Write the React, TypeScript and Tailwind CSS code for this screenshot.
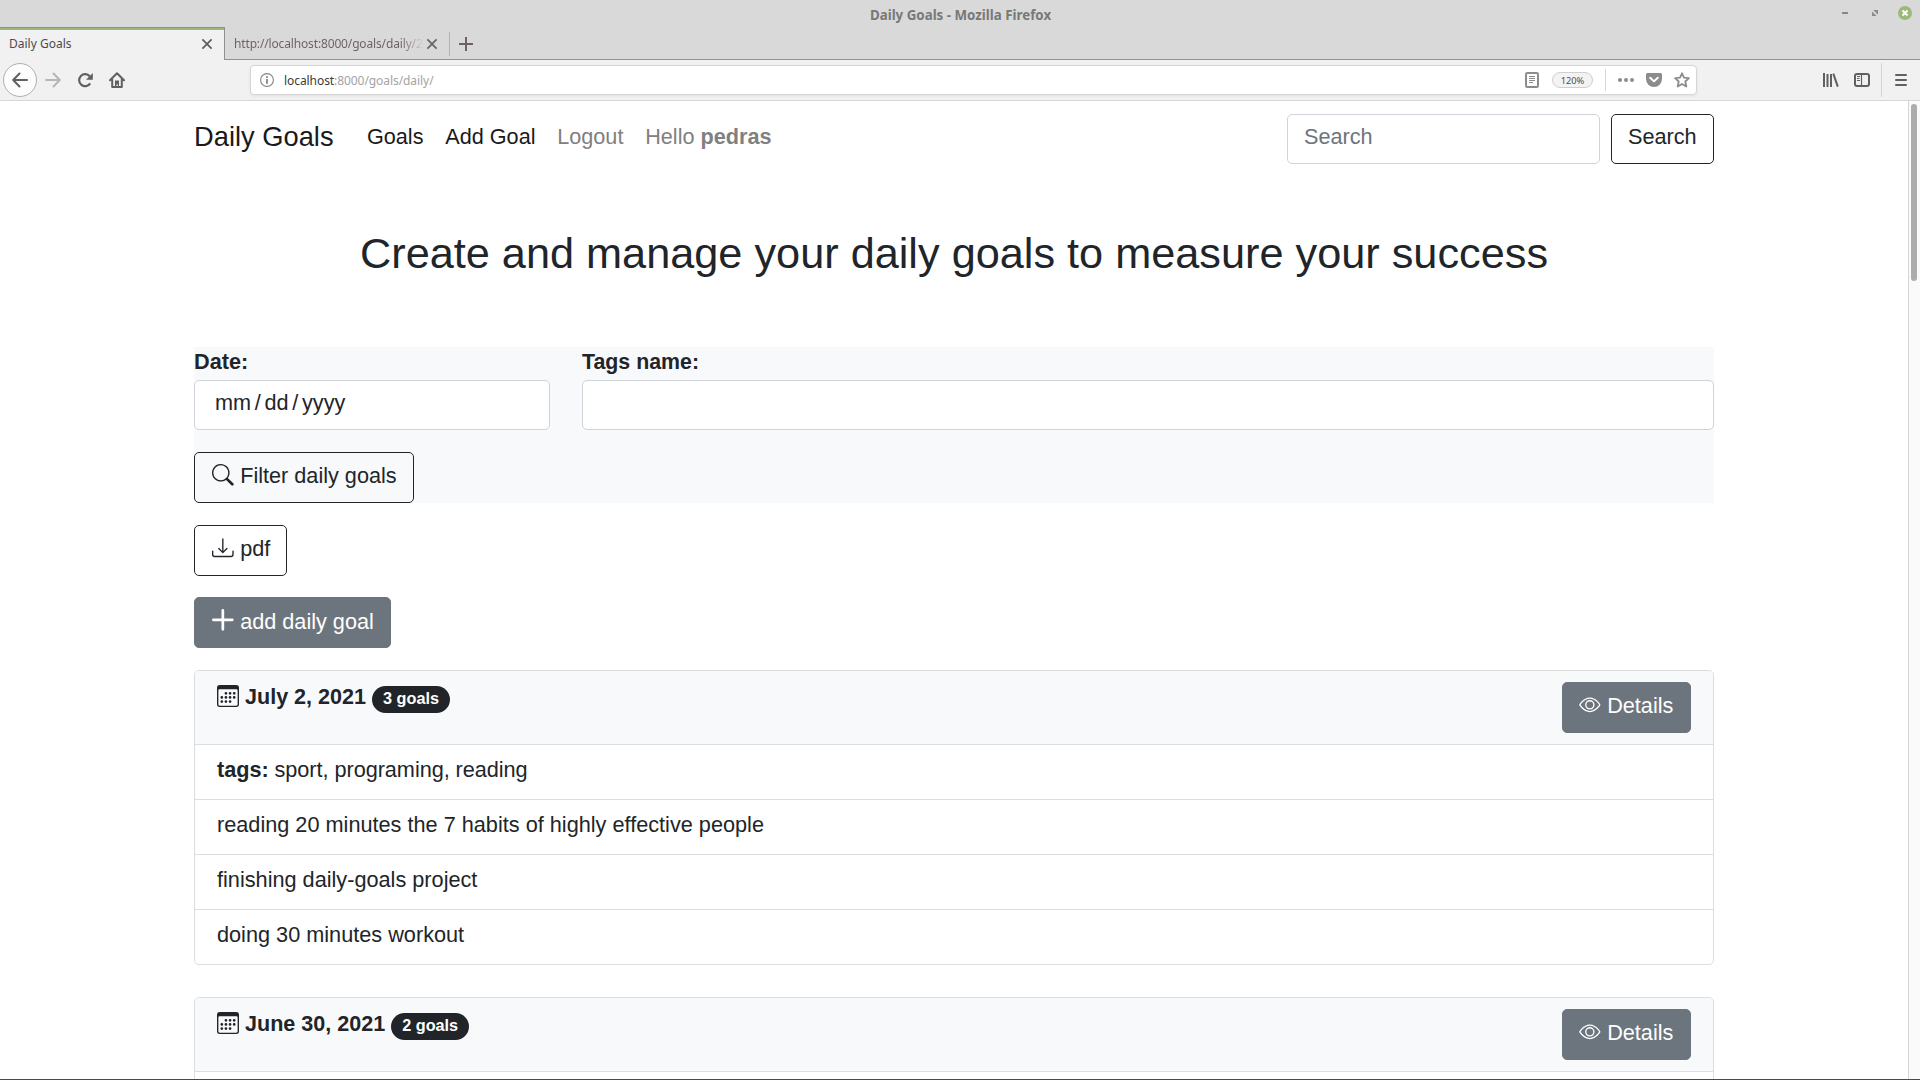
import React from "react";
import { BsSearch, BsDownload, BsCalendar3, BsEye } from "react-icons/bs";

function TabClose({ color }: { color: string }) {
  return (
    <svg className="size-[12px] shrink-0" viewBox="0 0 12 12" fill="none" stroke={color} strokeWidth="1.7">
      <path d="M1.4 1.4 10.6 10.6M10.6 1.4 1.4 10.6" />
    </svg>
  );
}

function PlusBold() {
  return (
    <svg width="1em" height="1em" viewBox="0 0 16 16" fill="currentColor">
      <path d="M8 0a1 1 0 0 1 1 1v6h6a1 1 0 1 1 0 2H9v6a1 1 0 1 1-2 0V9H1a1 1 0 0 1 0-2h6V1a1 1 0 0 1 1-1z" />
    </svg>
  );
}

function TitleBar() {
  return (
    <div className="relative h-[27px] shrink-0">
      <div className="pl-[1px] text-center text-[13.333px] leading-[30px] font-bold text-[#787878]">Daily Goals - Mozilla Firefox</div>
      <svg className="absolute top-[4px] right-[4px]" width="80" height="18" viewBox="0 0 80 18">
        <rect x="6" y="8" width="6" height="2" fill="#868686" />
        <path d="M37.5 6H42v4.5L40 9l-.8-1zM36 7.5l1.8 1.8 2 2L40.500 12H36z" fill="#8c8c8c" />
        <circle cx="69" cy="9" r="7" fill="#9bba7a" />
        <path d="m66.500 6.500 5 5m0-5-5 5" stroke="#fff" strokeWidth="2" />
      </svg>
    </div>
  );
}

function TabStrip() {
  return (
    <div className="flex h-[33px] shrink-0">
      <div className="flex w-[225px] items-center border-t border-r border-[#919191] bg-[#f1f1f1]">
        <div className="flex h-full w-full items-center justify-between border-t-2 border-[#9bb87c] pr-[11px] pb-[2px] pl-[9px]">
          <span className="text-[12px] leading-[16px] text-[#4b4b4b]">Daily Goals</span>
          <TabClose color="#5c5c5c" />
        </div>
      </div>
      <div className="flex flex-1 items-center border-b border-[#919191] pt-[1px]">
        <span className="ml-[9px] bg-linear-to-r from-[#6c5f60] from-88% to-[#d0cdcd] to-99% bg-clip-text text-[12px] leading-[16px] tracking-[-0.15px] whitespace-nowrap text-transparent">
          http://localhost:8000/goals/daily/2
        </span>
        <div className="ml-auto flex w-[1494px] items-center">
          <TabClose color="#6c6162" />
          <span className="ml-[11px] h-[24px] w-px bg-[#b3b3b3]" />
          <svg className="ml-[9px]" width="14" height="14" viewBox="0 0 14 14"><path d="M7 0v14M0 7h14" stroke="#6c6162" strokeWidth="2" /></svg>
        </div>
      </div>
    </div>
  );
}

function Toolbar() {
  return (
    <div className="flex h-[41px] shrink-0 items-center border-b border-[#d7d7d7] bg-[#f1f1f1]">
      <div className="ml-[3px] flex size-[34px] items-center justify-center rounded-full border border-[#b0b0b0] bg-[#fcfcfc]">
        <svg width="16" height="16" viewBox="0 0 16 16" fill="none" stroke="#606060" strokeWidth="2" strokeLinecap="round" strokeLinejoin="round"><path d="M15 8H1.500M7.500 1.500 1.200 8l6.300 6.500" /></svg>
      </div>
      <svg className="ml-[8px]" width="16" height="16" viewBox="0 0 16 16" fill="none" stroke="#b6b6b6" strokeWidth="2" strokeLinecap="round" strokeLinejoin="round"><path d="M1 8h13.500M8.500 1.500 14.800 8l-6.300 6.500" /></svg>
      <svg className="ml-[16px]" width="16" height="16" viewBox="0 0 16 16" fill="none" stroke="#606060" strokeWidth="2.200"><path d="M13.200 11.400A6 6 0 1 1 12.800 4.400" /><path d="M15.800 1v6.800H9z" fill="#606060" stroke="none" /></svg>
      <svg className="ml-[16px]" width="16" height="16" viewBox="0 0 16 16"><path d="M1 8.300 8 1.300l7 7M3.200 7v8h9.600V7" fill="none" stroke="#606060" strokeWidth="2" strokeLinecap="round" strokeLinejoin="round" /><path d="M6 8.500h4V15H8.900v-2.500H7.500V15H6z" fill="#606060" /></svg>

      <div className="ml-[125px] flex h-[30px] w-[1447px] items-center rounded-[4px] border border-[#d6d6d6] bg-white pr-[6px] pl-[9px] shadow-[0_1px_3px_rgba(0,0,0,0.07)]">
        <svg width="14" height="14" viewBox="0 0 14 14" fill="none" stroke="#858585"><circle cx="7" cy="7" r="6.400" strokeWidth="1.100" /><path d="M7 6v4.800M7 3.200v1.700" strokeWidth="1.800" /></svg>
        <span className="ml-[10px] pt-[2px] text-[12px] leading-[16px] tracking-[-0.07px] text-[#a3a3a3]"><span className="text-[#3a3a3a]">localhost</span>:8000/goals/daily/</span>
        <div className="ml-auto flex items-center">
          <svg width="14" height="16" viewBox="0 0 14 16" fill="none" stroke="#8c8c8c"><rect x="1" y="1" width="12" height="14" rx="1.300" strokeWidth="2" /><path d="M4 4.500h6M4 6.500h6M4 8.500h6M4 10.500h4" /></svg>
          <span className="ml-[13px] flex h-[16px] w-[41px] items-center justify-center rounded-full border border-[#cfcfcf] bg-[#f3f3f3] pt-px text-[9.300px] leading-none text-[#505050]">120%</span>
          <span className="ml-[12px] h-[22px] w-px bg-[#d6d6d6]" />
          <svg className="ml-[12px]" width="16" height="4" viewBox="0 0 16 4" fill="#8c8c8c"><circle cx="2" cy="2" r="2" /><circle cx="8" cy="2" r="2" /><circle cx="14" cy="2" r="2" /></svg>
          <svg className="ml-[12px]" width="16" height="14" viewBox="0 0 16 14"><path d="M1.500 0h13A1.500 1.500 0 0 1 16 1.500V6A8 8 0 0 1 0 6V1.500A1.500 1.500 0 0 1 1.500 0z" fill="#8c8c8c" /><path d="m4.200 4.700 3.800 3.700 3.800-3.700" fill="none" stroke="#fff" strokeWidth="2" strokeLinecap="round" strokeLinejoin="round" /></svg>
          <svg className="ml-[12px]" width="16" height="16" viewBox="0 0 16 16"><path d="m8 1.300 2 4.400 4.900.5-3.600 3.300 1 5L8 12l-4.300 2.500 1-5L1.100 6.200 6 5.700z" fill="none" stroke="#8c8c8c" strokeWidth="1.800" strokeLinejoin="round" /></svg>
        </div>
      </div>

      <div className="ml-auto flex items-center">
        <svg width="16" height="14" viewBox="0 0 16 14" fill="none" stroke="#606060"><path d="M1 0v14M4.500 1v13M8 1v13M10.300.7l4.500 13" strokeWidth="2" /></svg>
        <svg className="ml-[15px]" width="16" height="14" viewBox="0 0 16 14" fill="none" stroke="#606060"><rect x="1" y="1" width="14" height="12" rx="2" strokeWidth="2" /><path d="M7.500 1v12" strokeWidth="1.200" /><path d="M3 3.500h3M3 5.500h2.500M3 7.500h3" strokeWidth="1" /></svg>
        <span className="ml-[11px] h-[34px] w-px bg-[#d4d4d4]" />
        <svg className="mr-[13px] ml-[13px]" width="12" height="12" viewBox="0 0 12 12" stroke="#606060" strokeWidth="2" strokeLinecap="round"><path d="M1 1h10M1 6h10M1 11h10" /></svg>
      </div>
    </div>
  );
}

function Navbar() {
  return (
    <nav className="flex items-start pt-[13px]">
      <a className="w-[139px] pt-[3px] text-[27.300px] leading-[40px] whitespace-nowrap text-[#1a1a1a]">Daily Goals</a>
      <div className="ml-[34px] flex gap-[21.800px] pt-[7px] text-[21.640px] leading-[32px] text-[#1a1a1a]">
        <a>Goals</a>
        <a>Add Goal</a>
        <a className="text-[#808080]">Logout</a>
        <a className="text-[#808080]">Hello <b>pedras</b></a>
      </div>
      <div className="ml-auto flex">
        <div className="h-[50px] w-[313px] rounded-[5px] border border-[#ced4da] pt-[6px] pl-[16px] text-[21.670px] leading-[32px] text-[#6c757d]">Search</div>
        <button className="ml-[11px] flex h-[50px] w-[103px] rounded-[5px] border border-[#212529] pt-[6px] pl-[16px] text-[21.670px] leading-[32px]">Search</button>
      </div>
    </nav>
  );
}

type BtnProps = { icon: React.ReactNode; label: string; width: string; pad?: string; solid?: boolean; drop?: string };

function Btn({ icon, label, width, pad = "pl-[17px]", drop = "mt-[7px]", solid }: BtnProps) {
  const tone = solid ? "border-[#6c757d] bg-[#6c757d] text-white" : "border-[#212529] text-[#212529]";
  return (
    <button className={`flex h-[51px] items-start gap-[6.500px] rounded-[5px] border text-[21.670px] leading-[32px] whitespace-nowrap ${width} ${pad} ${tone}`}>
      <span className="mt-[11px]">{icon}</span>
      <span className={drop}>{label}</span>
    </button>
  );
}

function GoalCard({ date, count, rows }: { date: string; count: string; rows: React.ReactNode[] }) {
  return (
    <section className="shrink-0 overflow-hidden rounded-[5px] border border-[#dcdddf] bg-white">
      <header className="flex h-[74px] items-start border-b border-[#dcdddf] bg-[#f8f9fb] pr-[22px] pl-[22px]">
        <BsCalendar3 className="mt-[14px] size-[22px]" />
        <span className="mt-[10px] ml-[6px] text-[21.550px] leading-[32px] font-bold">{date}</span>
        <span className="mt-[15px] ml-[6px] h-[27px] rounded-full bg-[#212529] px-[11px] text-[16.250px] leading-[25px] font-bold text-white">{count}</span>
        <div className="mt-[11px] ml-auto">
          <Btn solid width="w-[129px]" pad="pl-[16px]" icon={<BsEye />} label="Details" />
        </div>
      </header>
      <ul className="divide-y divide-[#dcdddf] text-[21.700px] leading-[32px]">
        {rows.map((row, i) => (
          <li key={i} className="h-[55px] pt-[9px] pl-[22px] last:h-[54px]">{row}</li>
        ))}
      </ul>
    </section>
  );
}

const julyRows = [
  <span className="tracking-[-0.05px]"><b>tags:</b> sport, programing, reading</span>,
  "reading 20 minutes the 7 habits of highly effective people",
  "finishing daily-goals project",
  "doing 30 minutes workout",
];

export default function App() {
  return (
    <div className="flex h-[1080px] w-[1920px] flex-col overflow-hidden border-b border-[#4a4a4a] bg-[#d9d9d9] font-['Noto_Sans',sans-serif]">
      <TitleBar />
      <TabStrip />
      <Toolbar />
      <div className="flex min-h-0 flex-1 bg-white">
        <main className="flex w-[1908px] flex-col overflow-hidden pr-[194px] pl-[194px] font-['Liberation_Sans',sans-serif] text-[#212529]">
          <Navbar />
          <h1 className="mt-[63px] shrink-0 text-center text-[43.270px] leading-[52px]">Create and manage your daily goals to measure your success</h1>
          <form className="mt-[68px] h-[156px] shrink-0 bg-[#f8f9fb] text-[21.670px]">
            <div className="flex gap-[32px]">
              <div className="w-[356px]">
                <div className="h-[33px] leading-[30px] font-bold">Date:</div>
                <div className="flex h-[50px] gap-[3.700px] rounded-[5px] border border-[#ced4da] bg-white pt-[6px] pl-[20px] leading-[32px]">
                  <span>mm</span><span>/</span><span>dd</span><span>/</span><span>yyyy</span>
                </div>
              </div>
              <div className="flex-1">
                <div className="h-[33px] text-[21.350px] leading-[30px] font-bold">Tags name:</div>
                <div className="h-[50px] rounded-[5px] border border-[#ced4da] bg-white" />
              </div>
            </div>
            <div className="mt-[22px]"><Btn width="w-[220px]" icon={<BsSearch />} label="Filter daily goals" /></div>
          </form>
          <div className="mt-[22px]"><Btn width="w-[93px]" icon={<BsDownload />} label="pdf" /></div>
          <div className="mt-[21px] mb-[22px]"><Btn solid width="w-[197px]" drop="mt-[8px]" icon={<PlusBold />} label="add daily goal" /></div>
          <GoalCard date="July 2, 2021" count="3 goals" rows={julyRows} />
          <div className="h-[32px] shrink-0" />
          <GoalCard date="June 30, 2021" count="2 goals" rows={[""]} />
        </main>
        <div className="w-[12px] border-l border-[#d5d5d5] bg-[#fafafa] pt-[3px] pl-[2px]">
          <div className="h-[177px] w-[6px] rounded-full bg-[#acacac]" />
        </div>
      </div>
    </div>
  );
}
